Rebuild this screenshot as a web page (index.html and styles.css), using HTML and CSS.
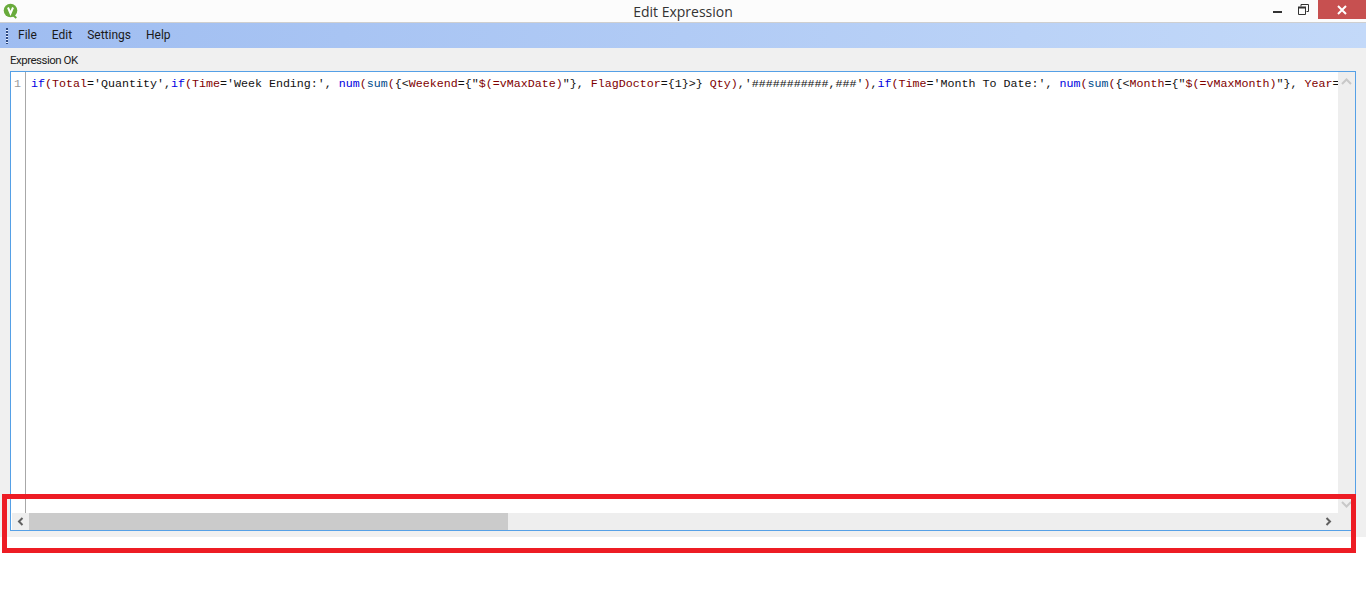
FILE: index.html
```html
<!DOCTYPE html>
<html lang="en">
<head>
<meta charset="utf-8">
<title>Edit Expression</title>
<link rel="stylesheet" href="styles.css">
</head>
<body>
<div class="window">
  <header class="titlebar">
    <svg class="logo" width="18" height="18" viewBox="0 0 18 18"><circle cx="9.500" cy="9.500" r="6.800" fill="#69ab3c"/><path d="M12.500 14.500l2.800 2.400" stroke="#69ab3c" stroke-width="2" fill="none"/><path d="M7 6.500l2.500 6 2.500-6" stroke="#fff" stroke-width="2" fill="none"/></svg>
    <div class="title">Edit Expression</div>
    <div class="controls">
      <svg class="ctl-min" width="9" height="3" viewBox="0 0 9 3"><rect width="9" height="2" y="1" fill="#333"/></svg>
      <svg class="ctl-restore" width="11" height="11" viewBox="0 0 11 11"><path d="M3 2.500V.5h7.500v7H8.500M.5 3.500h7v7h-7z" fill="none" stroke="#333"/><path d="M0 3.500h8" stroke="#333" stroke-width="2"/></svg>
      <div class="ctl-close"><svg width="10" height="10" viewBox="0 0 10 10"><path d="M1 1l8 8M9 1l-8 8" stroke="#fff" stroke-width="2"/></svg></div>
    </div>
  </header>
  <nav class="menubar">
    <div class="grip"></div>
    <span class="menu-item">File</span>
    <span class="menu-item">Edit</span>
    <span class="menu-item">Settings</span>
    <span class="menu-item">Help</span>
  </nav>
  <main class="panel">
    <div class="status">Expression OK</div>
    <div class="editor">
      <div class="editor-top">
        <div class="gutter">1</div>
        <div class="code"><span class="k">if</span><span class="p">(</span><span class="f">Total</span>='Quantity',<span class="k">if</span><span class="p">(</span><span class="f">Time</span>='Week Ending:', <span class="k">num</span><span class="p">(</span><span class="s">sum</span><span class="p">(</span>{&lt;<span class="f">Weekend</span>={"<span class="f">$(=vMaxDate)</span>"}, <span class="f">FlagDoctor</span>={1}&gt;} <span class="f">Qty</span><span class="p">)</span>,'###########,###'<span class="p">)</span>,<span class="k">if</span><span class="p">(</span><span class="f">Time</span>='Month To Date:', <span class="k">num</span><span class="p">(</span><span class="s">sum</span><span class="p">(</span>{&lt;<span class="f">Month</span>={"<span class="f">$(=vMaxMonth)</span>"}, <span class="f">Year</span>=</div>
        <div class="vscroll">
          <svg width="11" height="7" viewBox="0 0 11 7"><path d="M1 6l4.500-4.500L10 6" fill="none" stroke="#c8c8c8" stroke-width="2"/></svg>
          <svg width="11" height="7" viewBox="0 0 11 7"><path d="M1 1l4.500 4.500L10 1" fill="none" stroke="#c8c8c8" stroke-width="2"/></svg>
        </div>
      </div>
      <div class="hscroll">
        <div class="harrow"><svg width="7" height="9" viewBox="0 0 7 9"><path d="M5.500 1L2 4.500 5.500 8" fill="none" stroke="#606060" stroke-width="2"/></svg></div>
        <div class="hthumb"></div>
        <div class="htrack"></div>
        <div class="harrow harrow-r"><svg width="7" height="9" viewBox="0 0 7 9"><path d="M1.500 1L5 4.500 1.500 8" fill="none" stroke="#606060" stroke-width="2"/></svg></div>
      </div>
    </div>
  </main>
  <div class="highlight"></div>
</div>
</body>
</html>
```
FILE: styles.css
```css
html, body { margin: 0; padding: 0; background: #fff; }
.window { position: relative; width: 1366px; height: 613px; overflow: hidden; font-family: Roboto, "Noto Sans", sans-serif; color: #111; }
.titlebar { position: relative; display: flex; align-items: flex-start; height: 22px; background: #fcfcfc; border-bottom: 1px solid #cfcfcf; }
.logo { margin: 1px 0 0 1px; }
.title { position: absolute; left: 0; right: 0; top: 2px; text-align: center; font-family: "Open Sans", sans-serif; font-size: 14px; line-height: 20px; color: #333; }
.controls { position: relative; margin-left: auto; display: flex; align-items: flex-start; }
.ctl-min { margin: 10px 16px 0 0; }
.ctl-restore { margin: 4px 9px 0 0; }
.ctl-close { width: 48px; height: 19px; background: #c75050; display: flex; align-items: center; justify-content: center; }
.menubar { display: flex; align-items: center; height: 25px; background: linear-gradient(90deg, #9fbdf1 0%, #c3d9f9 100%); font-size: 12px; }
.grip { width: 2px; height: 16px; margin: 0 10px 0 6px; background: repeating-linear-gradient(180deg, #2f4a80 0 2px, #e8f0ff 2px 3px); }
.menu-item { margin-right: 15px; line-height: 25px; color: #1a1a1a; }
.panel { display: flex; flex-direction: column; height: 489px; background: #f0f0f0; padding: 0 10px 0 10px; box-sizing: border-box; }
.status { height: 23px; line-height: 24px; font-size: 11.500px; letter-spacing: -0.5px; color: #222; }
.editor { width: 1346px; height: 460px; box-sizing: border-box; border: 1px solid #55a0e6; background: #fff; display: flex; flex-direction: column; }
.editor-top { flex: 1; display: flex; min-height: 0; }
.gutter { width: 11px; flex: none; border-right: 1px solid #a8a8a8; font: 11.670px/24px "Liberation Mono", monospace; color: #9a9a9a; padding-left: 3px; }
.code { flex: 1; min-width: 0; overflow: hidden; white-space: pre; padding-left: 5px; font: 11.670px/24px "Liberation Mono", monospace; color: #111; }
.k { color: #0000e0; }
.s { color: #004a8a; }
.f { color: #800000; }
.p { color: #800000; }
.vscroll { width: 17px; flex: none; background: #eeeeee; display: flex; flex-direction: column; justify-content: space-between; align-items: center; padding: 6px 0 5px; box-sizing: border-box; }
.hscroll { height: 17px; flex: none; display: flex; background: #eeeeee; margin-left: 1px; }
.harrow { width: 17px; flex: none; display: flex; align-items: center; justify-content: center; }
.harrow-r { margin-right: 18px; }
.hthumb { width: 479px; flex: none; background: #cbcbcb; }
.htrack { flex: 1; }
.highlight { position: absolute; left: 2px; top: 494px; width: 1354px; height: 59px; box-sizing: border-box; border: 5px solid #ed1c24; }
```
